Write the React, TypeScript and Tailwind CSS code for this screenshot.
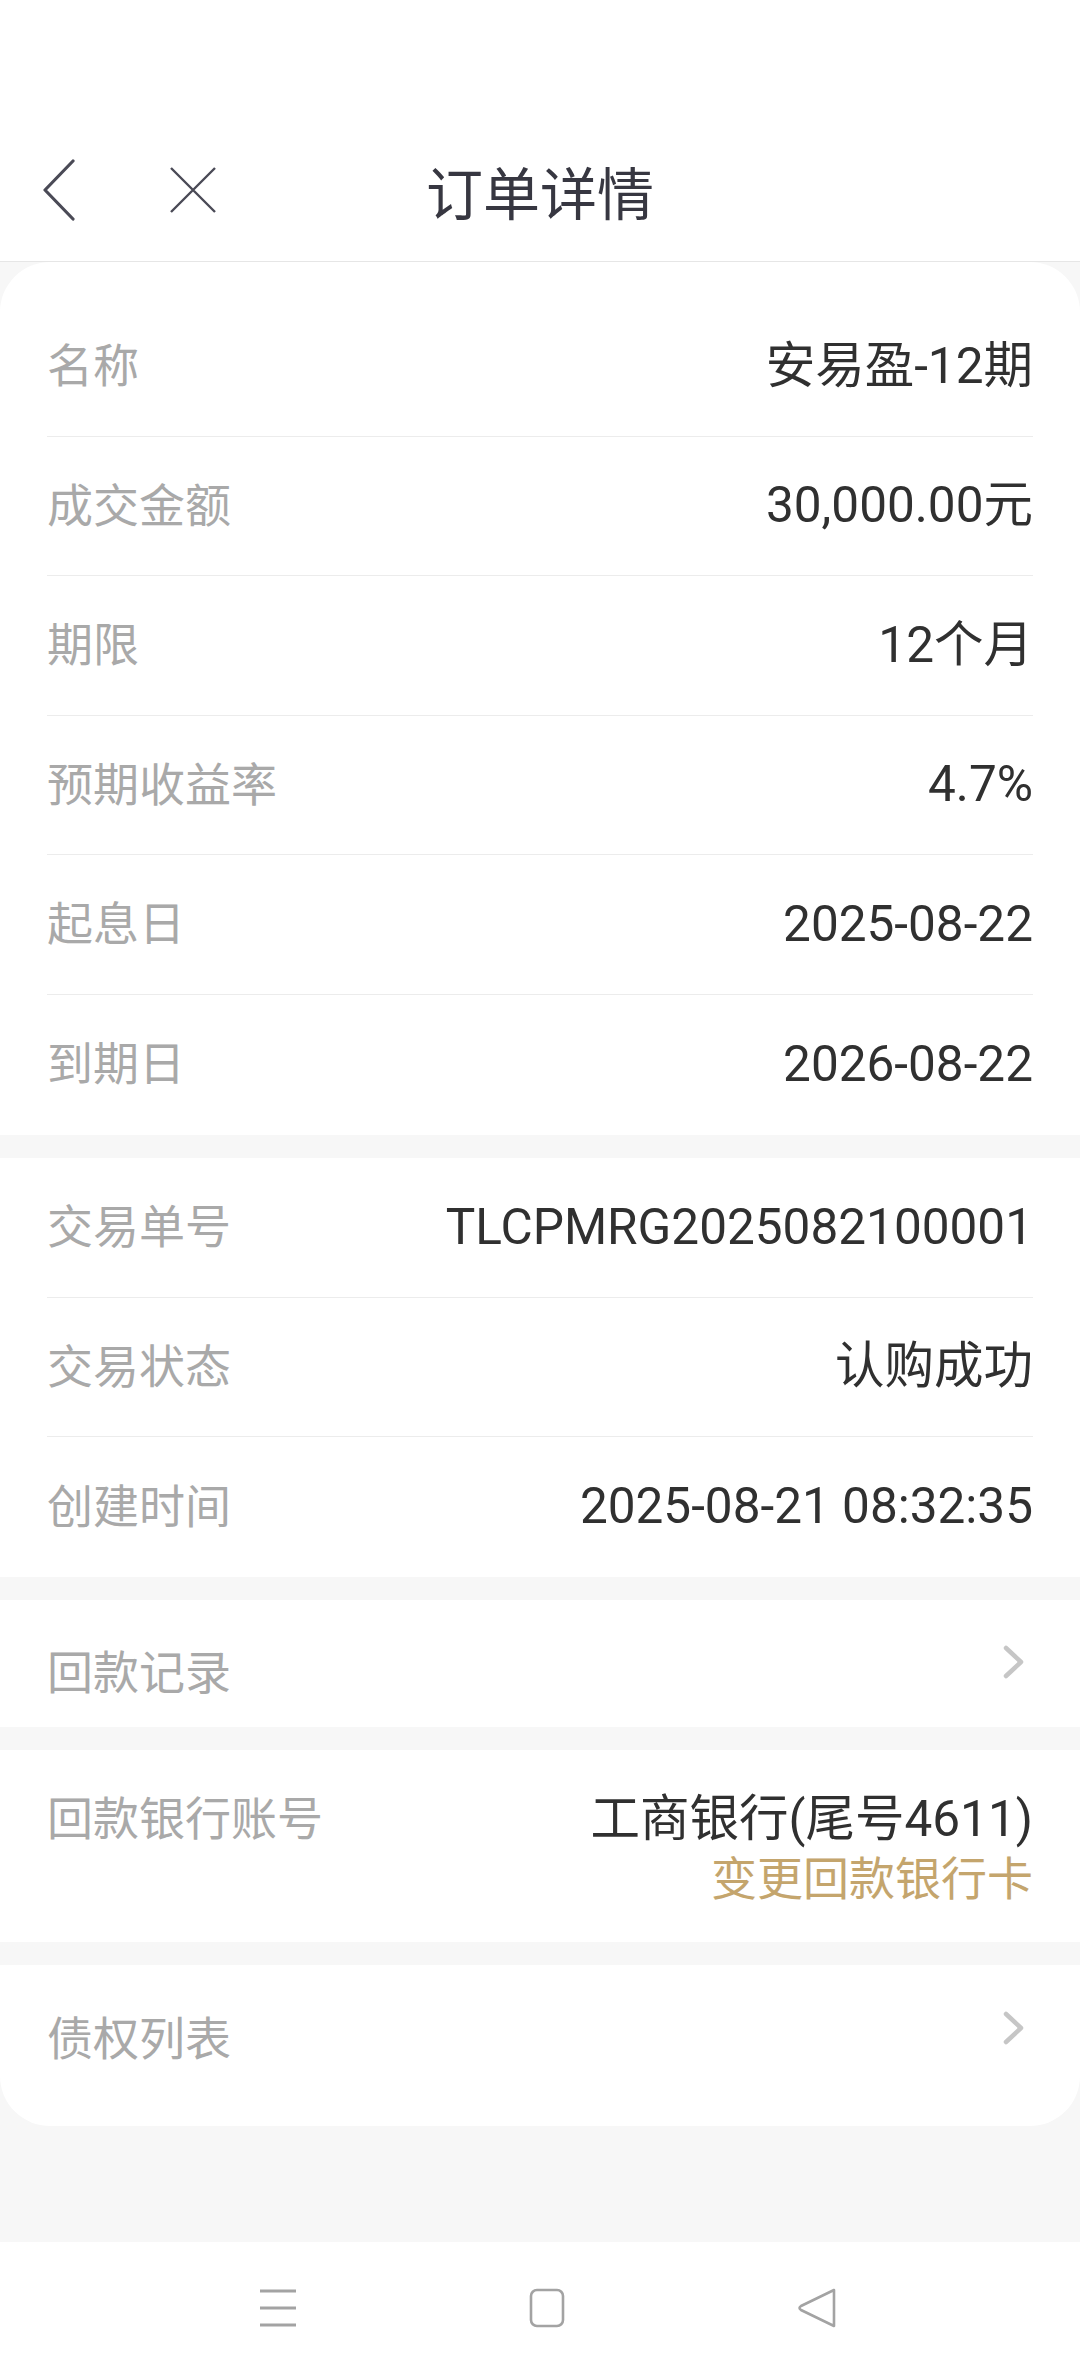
import React from "react";

const FONT = "font-['Roboto','Noto_Sans_CJK_SC',sans-serif]";

type Row = { label: string; value: string };

const productRows: Row[] = [
  { label: "名称", value: "安易盈-12期" },
  { label: "成交金额", value: "30,000.00元" },
  { label: "期限", value: "12个月" },
  { label: "预期收益率", value: "4.7%" },
  { label: "起息日", value: "2025-08-22" },
  { label: "到期日", value: "2026-08-22" },
];

const tradeRows: Row[] = [
  { label: "交易单号", value: "TLCPMRG2025082100001" },
  { label: "交易状态", value: "认购成功" },
  { label: "创建时间", value: "2025-08-21 08:32:35" },
];

const Chevron = ({ className }: { className?: string }) => (
  <svg width="22" height="34" viewBox="0 0 22 34" className={className}>
    <path
      d="M3 3 L18 17 L3 31"
      fill="none"
      stroke="#c6c6c6"
      strokeWidth="4.5"
      strokeLinecap="round"
      strokeLinejoin="round"
    />
  </svg>
);

const InfoRows = ({ rows }: { rows: Row[] }) => (
  <>
    {rows.map((row, i) => (
      <div
        key={row.label}
        className={`flex h-[139.5px] items-center justify-between ${
          i < rows.length - 1 ? "border-b border-[#ececec]" : ""
        }`}
      >
        <span className="text-[46px] leading-none text-[#a9a9a9]">{row.label}</span>
        <span className="text-[49.5px] leading-none text-[#303030]">{row.value}</span>
      </div>
    ))}
  </>
);

const App: React.FC = () => {
  return (
    <div className={`w-[1080px] min-h-[2373px] bg-[#f7f7f7] ${FONT}`}>
      {/* header */}
      <div className="bg-white pt-[128px] border-b border-[#e6e6e6]">
        <div className="grid h-[133px] pb-[9px] grid-cols-[1fr_auto_1fr] items-center">
          <div className="flex items-center pl-[42px] gap-[93px]">
            <svg width="34" height="62" viewBox="0 0 34 62">
              <path
                d="M31 2 L3 31 L31 60"
                fill="none"
                stroke="#4a4a56"
                strokeWidth="3.2"
                strokeLinecap="round"
                strokeLinejoin="round"
              />
            </svg>
            <svg width="48" height="48" viewBox="0 0 48 48">
              <path d="M2 2 L46 46 M46 2 L2 46" fill="none" stroke="#4a4a56" strokeWidth="2.4" />
            </svg>
          </div>
          <h1 className="text-[57px] leading-none text-[#373741] font-['Noto_Sans_CJK_SC',sans-serif]">
            订单详情
          </h1>
          <div />
        </div>
      </div>

      {/* product info */}
      <div className="bg-white rounded-t-[50px] px-[47px] pt-[35px] pb-[1px]">
        <InfoRows rows={productRows} />
      </div>

      {/* trade info */}
      <div className="mt-[23px] bg-white px-[47px]">
        <InfoRows rows={tradeRows} />
      </div>

      {/* repayment record */}
      <div className="mt-[23px] h-[127px] bg-white px-[47px] pt-[50px] flex items-start justify-between">
        <span className="text-[46px] leading-[46px] text-[#a9a9a9]">回款记录</span>
        <Chevron className="mt-[-5px] mr-[8px]" />
      </div>

      {/* bank account */}
      <div className="mt-[23px] h-[192px] bg-white px-[47px] pt-[39px] flex items-start justify-between">
        <span className="text-[46px] leading-[60px] text-[#a9a9a9]">回款银行账号</span>
        <div className="flex flex-col items-end leading-[60px]">
          <span className="text-[49.5px] text-[#303030]">工商银行(尾号4611)</span>
          <span className="text-[46px] text-[#c4a56d]">变更回款银行卡</span>
        </div>
      </div>

      {/* debt list */}
      <div className="mt-[23px] h-[161px] bg-white rounded-b-[50px] px-[47px] pt-[51px] flex items-start justify-between">
        <span className="text-[46px] leading-[46px] text-[#a9a9a9]">债权列表</span>
        <Chevron className="mt-[-5px] mr-[8px]" />
      </div>

      <div className="h-[116px]" />

      {/* system nav bar */}
      <div className="flex h-[132px] items-center bg-white pl-[259px] gap-[232px]">
        <svg width="38" height="40" viewBox="0 0 38 40">
          <path d="M1 3 H37 M1 20 H37 M1 37 H37" stroke="#a3a3a3" strokeWidth="3" />
        </svg>
        <svg width="36" height="40" viewBox="0 0 36 40">
          <rect x="2" y="2" width="32" height="36" rx="6" fill="none" stroke="#a3a3a3" strokeWidth="2.6" />
        </svg>
        <svg width="40" height="40" viewBox="0 0 40 40">
          <path
            d="M37 2 L4 18 Q1 20 4 22 L37 38 Z"
            fill="none"
            stroke="#a3a3a3"
            strokeWidth="2.6"
            strokeLinejoin="round"
          />
        </svg>
      </div>
    </div>
  );
};

export default App;
